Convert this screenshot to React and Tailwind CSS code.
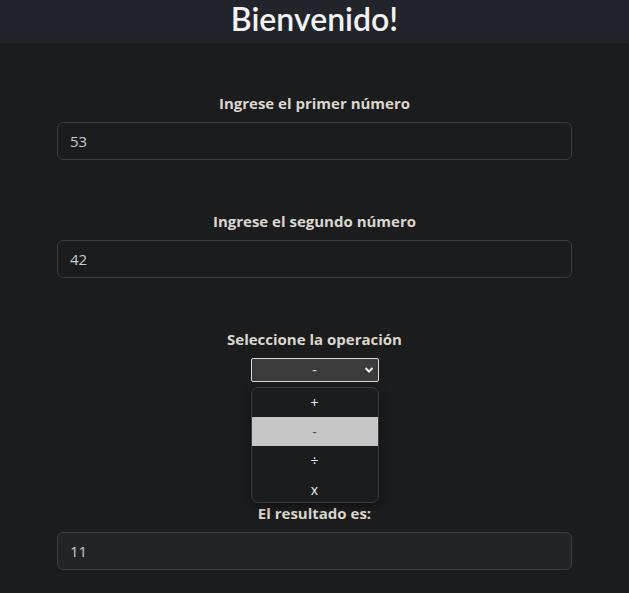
import React from 'react';

const font = { fontFamily: '"Open Sans", "Noto Sans", sans-serif' };

const Field = ({ label, value, muted }) => (
  <div className="flex flex-col items-center">
    <label className="text-[15px] font-bold text-[#dcd6cc] leading-[22px] mb-[8px]">{label}</label>
    <div
      className={
        'w-full h-[38px] rounded-[6px] border border-[#3a3d41] px-[12px] flex items-center text-[15px] text-[#c9ccd0] ' +
        (muted ? 'bg-[#222527]' : 'bg-[#1b1c1e]')
      }
    >
      {value}
    </div>
  </div>
);

export default function App() {
  return (
    <div className="min-h-[593px] bg-[#1b1c1e] text-white" style={font}>
      {/* header */}
      <header className="h-[43px] bg-[#21242b] flex justify-center items-start">
        <h1 className="font-['Lato',sans-serif] text-[32px] font-semibold leading-[38px] text-[#f2f2f2]">Bienvenido!</h1>
      </header>

      <main className="w-[515px] mx-auto pt-[49px]">
        <Field label="Ingrese el primer número" value="53" />

        <div className="mt-[50px]">
          <Field label="Ingrese el segundo número" value="42" />
        </div>

        <div className="mt-[50px] flex flex-col items-center relative">
          <label className="text-[15px] font-bold text-[#dcd6cc] leading-[22px] mb-[8px]">Seleccione la operación</label>
          <div className="w-[128px] h-[24px] bg-[#3b3b3b] border border-[#d8d8d8] rounded-[2px] flex items-center relative">
            <span className="flex-1 text-center text-[14px] text-[#e0e0e0] leading-none">-</span>
            <svg className="absolute right-[4px]" width="10" height="8" viewBox="0 0 10 8" fill="none">
              <path d="M1.5 2 L5 5.5 L8.5 2" stroke="#f0f0f0" strokeWidth="2" />
            </svg>
          </div>

          {/* open list */}
          <div className="absolute top-[59px] w-[128px] h-[116px] bg-[#1b1c1e] border border-[#3a3c40] rounded-[7px] overflow-hidden z-10 text-[14px] text-[#f0f0f0] shadow-[0_2px_8px_rgba(0,0,0,0.5)]">
            <div className="h-[29px] flex items-center justify-center">+</div>
            <div className="h-[29px] flex items-center justify-center bg-[#c6c6c6] text-[#555]">-</div>
            <div className="h-[29px] flex items-center justify-center">÷</div>
            <div className="h-[29px] flex items-center justify-center">x</div>
          </div>
        </div>

        <div className="mt-[120px]">
          <Field label="El resultado es:" value="11" muted />
        </div>
      </main>
    </div>
  );
}
